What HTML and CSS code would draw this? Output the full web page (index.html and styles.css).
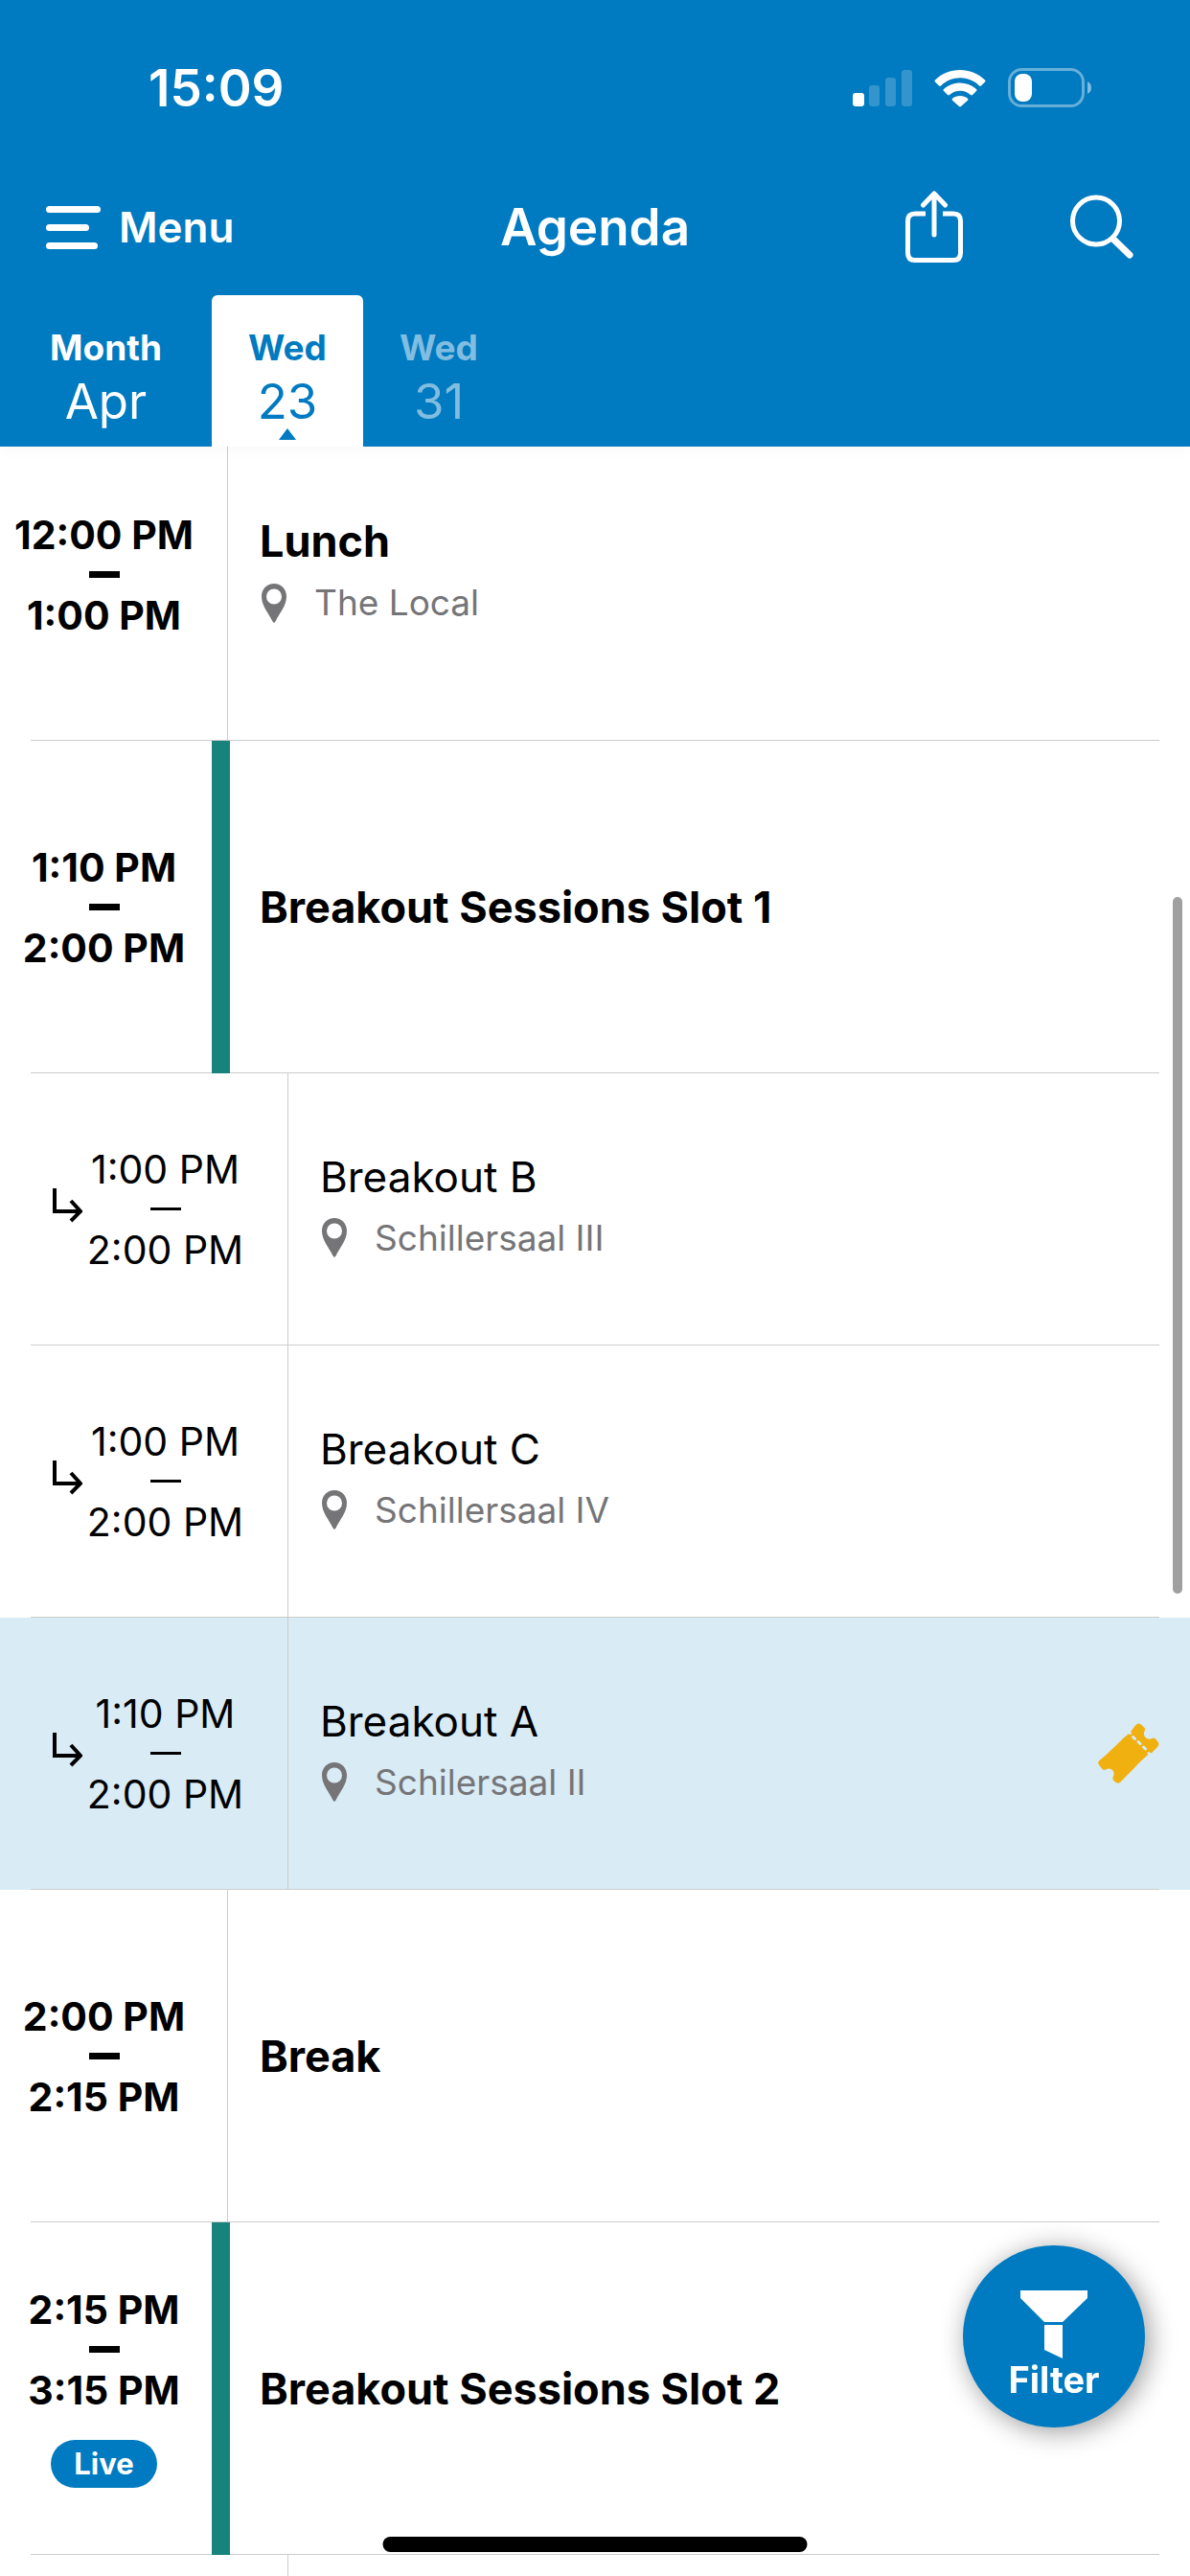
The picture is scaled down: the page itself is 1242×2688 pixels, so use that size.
FILE: index.html
```html
<!DOCTYPE html>
<html lang="en">
<head>
<meta charset="utf-8">
<meta name="viewport" content="width=device-width, initial-scale=1">
<title>Agenda</title>
<link rel="stylesheet" href="styles.css">
</head>
<body>
<svg class="sprite" aria-hidden="true">
  <symbol id="pin" viewBox="0 0 26 41">
    <path fill="currentColor" fill-rule="evenodd" d="M13 0C5.500 0 0 5.500 0 13.500C0 23 7.500 31 11.500 39.500Q13 42 14.500 39.500C18.500 31 26 23 26 13.500C26 5.500 20.500 0 13 0ZM13 5.500A8 8 0 1 1 13 21.500A8 8 0 1 1 13 5.500Z"/>
  </symbol>
  <symbol id="branch" viewBox="0 0 32 44">
    <path fill="none" stroke="currentColor" stroke-width="4" d="M3 0V24H29M20 13L30 24L20 34"/>
  </symbol>
</svg>
<header class="header">
  <div class="status">
    <span class="clock">15:09</span>
    <span class="status-icons">
      <svg width="62" height="40" viewBox="0 0 62 40" fill="#fff">
        <rect x="0" y="25" width="12" height="14" rx="3"/>
        <g opacity=".2"><rect x="17" y="17" width="11" height="22" rx="3"/><rect x="34" y="9" width="11" height="30" rx="3"/><rect x="51" y="1" width="11" height="38" rx="3"/></g>
      </svg>
      <svg width="54" height="40" viewBox="0 0 54 40" fill="#fff">
        <path d="M27 1C37 1 46.500 5 53 11.500Q54 12.500 53 13.500L49 17.500Q48 18.300 47 17.400C41.500 12 34.500 9.200 27 9.200S12.500 12 7 17.400Q6 18.300 5 17.500L1 13.500Q0 12.500 1 11.500C7.500 5 17 1 27 1Z"/>
        <path d="M27 14.500C33.500 14.500 39.500 17 44 21Q45 22 44 23L40 27Q39 27.900 38 27C35 24.200 31 22.700 27 22.700S19 24.200 16 27Q15 27.900 14 27L10 23Q9 22 10 21C14.500 17 20.500 14.500 27 14.500Z"/>
        <path d="M27 28C30 28 32.800 29 35 30.800Q36 31.800 35 32.800L28 39Q27 39.900 26 39L19 32.800Q18 31.800 19 30.800C21.200 29 24 28 27 28Z"/>
      </svg>
      <svg width="88" height="42" viewBox="0 0 88 42">
        <rect x="1.500" y="1.500" width="77" height="38" rx="13" fill="none" stroke="#fff" stroke-width="3" opacity=".4"/>
        <path d="M83 14Q87 16 87 20.500T83 27Z" fill="#fff" opacity=".5"/>
        <rect x="7" y="6" width="18" height="29" rx="8" fill="#fff"/>
      </svg>
    </span>
  </div>
  <div class="navbar">
    <button class="menu" type="button">
      <svg width="58" height="46" viewBox="0 0 58 46" stroke="#fff" stroke-width="7" stroke-linecap="round"><path d="M3.500 4.500H53.500M3.500 23.500H41.500M3.500 42.500H50.500"/></svg>
      Menu
    </button>
    <h1 class="title">Agenda</h1>
    <div class="actions">
      <button type="button" aria-label="Share">
        <svg width="60" height="76" viewBox="0 0 60 76" fill="none" stroke="#fff" stroke-width="5" stroke-linecap="round" stroke-linejoin="round"><path stroke-linecap="butt" d="M21 24H10Q2.500 24 2.500 31.500V65Q2.500 72.500 10 72.500H50Q57.500 72.500 57.500 65V31.500Q57.500 24 50 24H39"/><path d="M30 46V4M18.500 15L30 3L41.500 15"/></svg>
      </button>
      <button type="button" aria-label="Search">
        <svg width="66" height="68" viewBox="0 0 66 68" fill="none" stroke="#fff" stroke-linecap="round"><circle cx="27" cy="27.500" r="24.500" stroke-width="5"/><path stroke-width="7" d="M45 46.500L62 63"/></svg>
      </button>
    </div>
  </div>
  <nav class="tabs" aria-label="Days">
    <button class="tab tab-month" type="button"><span class="tab-label">Month</span><span class="tab-value">Apr</span></button>
    <button class="tab tab-active" type="button"><span class="tab-label">Wed</span><span class="tab-value">23</span><span class="tab-mark"></span></button>
    <button class="tab tab-dim" type="button"><span class="tab-label">Wed</span><span class="tab-value">31</span></button>
  </nav>
</header>
<main class="agenda">
  <ul class="list">
    <li class="row">
      <div class="when"><div class="times"><time>12:00 PM</time><span class="dash"></span><time>1:00 PM</time></div></div>
      <span class="rail"></span>
      <div class="what"><h2 class="name">Lunch</h2><p class="place"><svg class="pin"><use href="#pin"/></svg>The Local</p></div>
    </li>
    <li class="row row-slot">
      <div class="when"><div class="times"><time>1:10 PM</time><span class="dash"></span><time>2:00 PM</time></div></div>
      <span class="rail"></span>
      <div class="what"><h2 class="name">Breakout Sessions Slot 1</h2></div>
    </li>
    <li class="row row-sub">
      <div class="when"><svg class="branch"><use href="#branch"/></svg><div class="times"><time>1:00 PM</time><span class="dash"></span><time>2:00 PM</time></div></div>
      <span class="rail"></span>
      <div class="what"><h3 class="name">Breakout B</h3><p class="place"><svg class="pin"><use href="#pin"/></svg>Schillersaal III</p></div>
    </li>
    <li class="row row-sub">
      <div class="when"><svg class="branch"><use href="#branch"/></svg><div class="times"><time>1:00 PM</time><span class="dash"></span><time>2:00 PM</time></div></div>
      <span class="rail"></span>
      <div class="what"><h3 class="name">Breakout C</h3><p class="place"><svg class="pin"><use href="#pin"/></svg>Schillersaal IV</p></div>
    </li>
    <li class="row row-sub row-booked">
      <div class="when"><svg class="branch"><use href="#branch"/></svg><div class="times"><time>1:10 PM</time><span class="dash"></span><time>2:00 PM</time></div></div>
      <span class="rail"></span>
      <div class="what"><h3 class="name">Breakout A</h3><p class="place"><svg class="pin"><use href="#pin"/></svg>Schilersaal II</p></div>
      <svg class="ticket" viewBox="0 0 64 64" role="img" aria-label="Ticket">
        <path fill="#f0b010" d="M31 12L34 9L39 2.500Q42 -1 45 1.500L48 4.500Q50 6 48.500 8.500C46 13.500 51.500 18.500 56.500 16Q58.500 14.500 60.500 17L62.500 19.500Q64.500 22 62 25L56 31L51 34C41 43 34 51 24 61Q21 64 18 61.500L16.500 60Q14.500 58 16 55.500C18.500 50.500 13 45.500 8 48.500Q5.500 49.500 4 47.500L1 43.500Q-1 41 2 38.500C14 29 21 20 31 12Z"/>
        <path fill="none" stroke="#d9ebf5" stroke-width="3" stroke-linecap="round" d="M32 9L33.500 10.500M36.500 14.500L38.500 16.500M42 19.500L44 21.500M47.500 25L49.500 27M53 31.500L55 33.500"/>
      </svg>
    </li>
    <li class="row">
      <div class="when"><div class="times"><time>2:00 PM</time><span class="dash"></span><time>2:15 PM</time></div></div>
      <span class="rail"></span>
      <div class="what"><h2 class="name">Break</h2></div>
    </li>
    <li class="row row-slot">
      <div class="when"><div class="times"><time>2:15 PM</time><span class="dash"></span><time>3:15 PM</time><span class="live">Live</span></div></div>
      <span class="rail"></span>
      <div class="what"><h2 class="name">Breakout Sessions Slot 2</h2></div>
    </li>
    <li class="row row-sub">
      <div class="when"></div>
      <span class="rail"></span>
    </li>
  </ul>
</main>
<span class="scrollbar"></span>
<button class="filter" type="button">
  <svg width="70" height="71" viewBox="0 0 70 71" fill="#fff"><path d="M0 0H70V8L44 33H25L0 8ZM25 36H44V71L25 62Z"/></svg>
  Filter
</button>
<span class="home"></span>
</body>
</html>
```
FILE: styles.css
```css
* { box-sizing: border-box; }

body {
  margin: 0;
  height: 100vh;
  display: flex;
  flex-direction: column;
  background: #fff;
  color: #000;
  font-family: Inter, "Liberation Sans", sans-serif;
}

h1, h2, h3, p, ul { margin: 0; padding: 0; }
svg { display: block; flex: none; }
button {
  padding: 0;
  border: 0;
  background: none;
  color: inherit;
  font: inherit;
}
.sprite { position: absolute; width: 0; height: 0; }

/* Header */
.header {
  position: relative;
  z-index: 1;
  flex: none;
  background: #007ac0;
  color: #fff;
  box-shadow: 0 2px 16px rgba(0, 0, 0, .04);
}
.status {
  display: flex;
  align-items: center;
  justify-content: space-between;
  height: 170px;
  padding: 14px 102px 0 155px;
}
.clock { font-size: 53px; font-weight: 600; }
.status-icons { display: flex; align-items: center; gap: 23px; }
.navbar {
  display: grid;
  grid-template-columns: 1fr auto 1fr;
  align-items: center;
  height: 138px;
  padding: 0 48px 4px;
}
.menu {
  display: flex;
  align-items: center;
  gap: 18px;
  font-size: 44px;
  font-weight: 600;
}
.title { font-size: 53px; font-weight: 600; }
.actions {
  display: flex;
  align-items: center;
  justify-content: flex-end;
  gap: 112px;
  padding-right: 11px;
}

.tabs { display: flex; height: 158px; }
.tab {
  display: flex;
  flex-direction: column;
  align-items: center;
  width: 158px;
  padding-top: 27px;
  line-height: 56px;
}
.tab-month { width: 221px; }
.tab-active {
  background: #fff;
  color: #007ac0;
  border-radius: 6px 6px 0 0;
}
.tab-dim { color: #80bde0; }
.tab-label { font-size: 37px; font-weight: 700; }
.tab-value { font-size: 51px; }
.tab-mark {
  width: 18px;
  height: 12px;
  background: currentColor;
  clip-path: polygon(50% 0, 100% 100%, 0 100%);
}

/* Agenda list */
.agenda { flex: 1; min-height: 0; overflow: hidden; }
.list { margin-top: -40px; list-style: none; }
.row {
  display: flex;
  min-height: 347px;
  background: linear-gradient(#ccc, #ccc) 32px 100% / calc(100% - 64px) 1px no-repeat;
  font-weight: 700;
}
.when {
  display: flex;
  align-items: center;
  width: 221px;
  padding-right: 4px;
}
.times {
  display: flex;
  flex: 1;
  flex-direction: column;
  align-items: center;
  font-size: 41px;
  line-height: 60px;
}
.dash { width: 32px; height: 7px; margin: 8px 0 9px; background: currentColor; }
.rail {
  width: 19px;
  background: linear-gradient(#ccc, #ccc) 16px 0 / 1px 100% no-repeat;
}
.row-slot .rail { background: #18837d; }
.what {
  display: flex;
  flex: 1;
  flex-direction: column;
  justify-content: center;
  padding-left: 31px;
}
.name { font-size: 45px; line-height: 64px; font-weight: inherit; }
.place {
  display: flex;
  align-items: center;
  gap: 29px;
  padding: 0 0 5px 2px;
  color: #757578;
  font-size: 37px;
  font-weight: 400;
  line-height: 64px;
}
.pin { width: 26px; height: 41px; }
.live {
  margin: 22px 0 10px;
  padding: 0 24px;
  border-radius: 25px;
  background: #007ac0;
  color: #fff;
  font-size: 31px;
  line-height: 50px;
}

.row-sub { min-height: 284px; font-weight: 400; }
.row-sub .when { width: 284px; padding: 0 25px 0 54px; }
.row-sub .dash { height: 3px; margin: 10px 0 11px; }
.row-sub .name { font-size: 44px; }
.branch { width: 32px; height: 44px; }
.row-booked { background-color: #d9ebf5; }
.ticket { align-self: center; width: 64px; height: 64px; margin-right: 32px; }

/* Overlays */
.scrollbar {
  position: fixed;
  top: 936px;
  right: 8px;
  z-index: 2;
  width: 10px;
  height: 727px;
  border-radius: 5px;
  background: #a0a0a0;
}
.filter {
  position: fixed;
  right: 47px;
  bottom: 155px;
  z-index: 2;
  display: flex;
  flex-direction: column;
  align-items: center;
  width: 190px;
  height: 190px;
  padding-top: 47px;
  border-radius: 50%;
  background: #007ac0;
  box-shadow: 4px 4px 28px rgba(0, 0, 0, .4);
  color: #fff;
  font-size: 38px;
  font-weight: 700;
  line-height: 44px;
}
.home {
  position: fixed;
  bottom: 25px;
  left: 50%;
  z-index: 3;
  width: 443px;
  height: 16px;
  border-radius: 8px;
  background: #000;
  transform: translateX(-50%);
}
```
